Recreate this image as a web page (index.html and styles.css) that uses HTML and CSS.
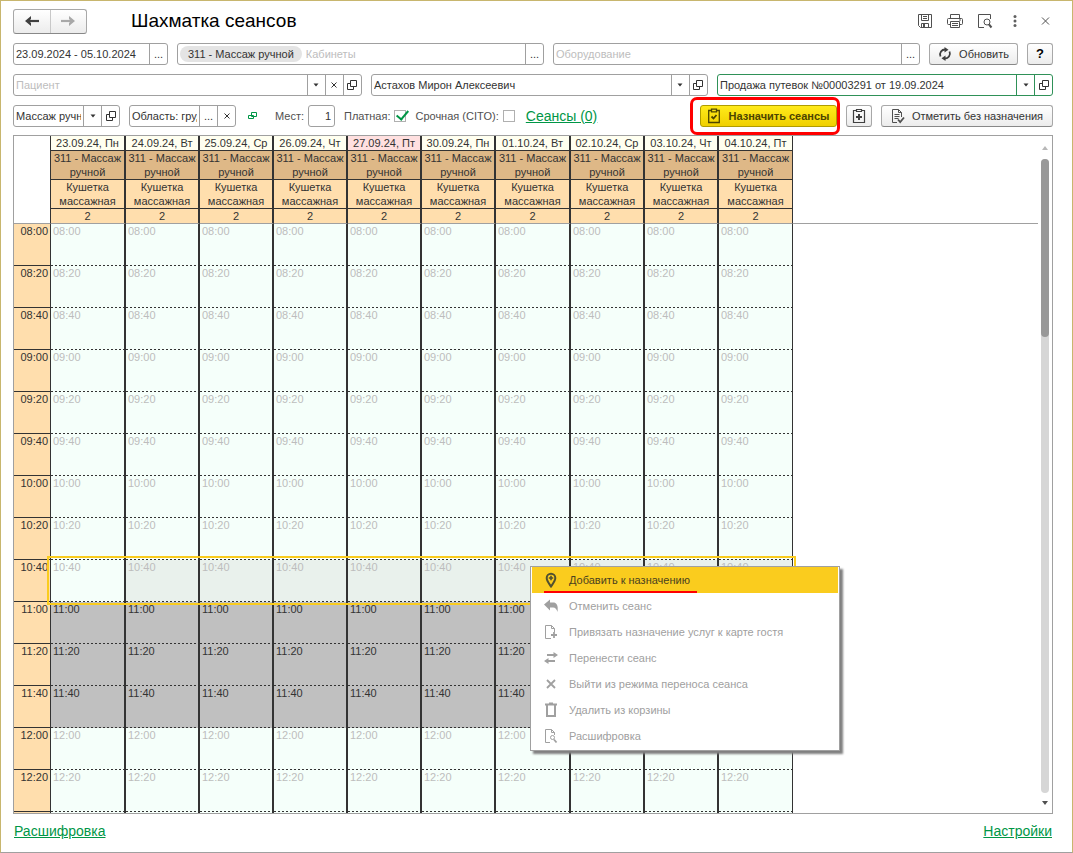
FILE: index.html
```html
<!DOCTYPE html>
<html lang="ru">
<head>
<meta charset="utf-8">
<title>Шахматка сеансов</title>
<link rel="stylesheet" href="styles.css">
</head>
<body>
<svg class="sprite" aria-hidden="true">
  <symbol id="open" viewBox="0 0 12 12"><path d="M4.500 1.500h6v6h-6zM4.500 4.500h-3v6h6v-3" fill="none" stroke="currentColor"/></symbol>
  <symbol id="down" viewBox="0 0 12 12"><path d="M3.500 4.500h5l-2.500 3z" fill="currentColor"/></symbol>
  <symbol id="cross" viewBox="0 0 12 12"><path d="M3.500 3.500l5 5m0-5l-5 5" fill="none" stroke="currentColor"/></symbol>
</svg>
<main class="window">
  <header class="titlebar">
    <div class="nav">
      <button type="button" aria-label="Назад"><svg width="16" height="12" viewBox="0 0 16 12"><path d="M15 6H5" fill="none" stroke="#404040" stroke-width="2.200"/><path d="M1 6l6-5v3L5 6l2 2v3z" fill="#404040"/></svg></button>
      <button type="button" aria-label="Вперед" class="forward"><svg width="16" height="12" viewBox="0 0 16 12"><path d="M1 6h10" fill="none" stroke="#a8a8a8" stroke-width="2.200"/><path d="M15 6L9 1v3l2 2-2 2v3z" fill="#a8a8a8"/></svg></button>
    </div>
    <h1>Шахматка сеансов</h1>
    <div class="tools">
      <button type="button" aria-label="Сохранить"><svg width="16" height="16" viewBox="0 0 16 16" fill="none" stroke="#505050"><path d="M1.500 1.500h13v13h-11l-2-2z"/><path d="M4.500 1.500v6h7v-6M6 3.500h4M6 5.500h4M4.500 14.500v-4h7v4"/><path d="M6 11h2v3H6z" fill="#505050" stroke="none"/></svg></button>
      <button type="button" aria-label="Печать"><svg width="16" height="16" viewBox="0 0 16 16" fill="none" stroke="#505050"><path d="M3.500 5V1.500h9V5M3.500 11.500h-2a1 1 0 0 1-1-1v-4a1 1 0 0 1 1-1h13a1 1 0 0 1 1 1v4a1 1 0 0 1-1 1h-2"/><path d="M3.500 8.500h9v6h-9zM5 10.500h6M5 12.500h6M12 7h2"/></svg></button>
      <button type="button" aria-label="Просмотр"><svg width="16" height="16" viewBox="0 0 16 16" fill="none" stroke="#505050"><path d="M7 14.500H1.500v-13h12V6"/><circle cx="10" cy="9" r="3"/><path d="M12 11.500l2.500 3" stroke-width="2"/></svg></button>
      <button type="button" aria-label="Меню"><svg width="16" height="16" viewBox="0 0 16 16" fill="#606060"><circle cx="8" cy="3.500" r="1.500"/><circle cx="8" cy="8" r="1.500"/><circle cx="8" cy="12.500" r="1.500"/></svg></button>
      <button type="button" aria-label="Закрыть"><svg width="16" height="16" viewBox="0 0 16 16"><path d="M5 4.500l7 7m0-7l-7 7" stroke="#505050" fill="none"/></svg></button>
    </div>
  </header>

  <section class="row">
    <div class="field period"><input aria-label="Период" value="23.09.2024 - 05.10.2024"><button type="button" aria-label="Выбрать период">...</button></div>
    <div class="field rooms"><span class="chip">311 - Массаж ручной</span><input aria-label="Кабинеты" placeholder="Кабинеты"><button type="button" aria-label="Выбрать кабинеты">...</button></div>
    <div class="field equipment"><input aria-label="Оборудование" placeholder="Оборудование"><button type="button" aria-label="Выбрать оборудование">...</button></div>
    <button type="button" class="btn refresh"><svg width="14" height="14" viewBox="0 0 14 14" fill="none" stroke="#404040" stroke-width="1.800"><path d="M2.500 9.500A5 5 0 0 1 7.500 2.500M11.500 4.500A5 5 0 0 1 6.500 11.500"/><path d="M6.500 0l4 2.700-4 2.800zM7.500 8.500l-4 2.800 4 2.700z" fill="#404040" stroke="none"/></svg>Обновить</button>
    <button type="button" class="btn help">?</button>
  </section>

  <section class="row">
    <div class="field patient"><input aria-label="Пациент" placeholder="Пациент"><button type="button" aria-label="Список"><svg><use href="#down"/></svg></button><button type="button" aria-label="Очистить"><svg><use href="#cross"/></svg></button><button type="button" aria-label="Открыть"><svg><use href="#open"/></svg></button></div>
    <div class="field doctor"><input aria-label="Врач" value="Астахов Мирон Алексеевич"><button type="button" aria-label="Список"><svg><use href="#down"/></svg></button><button type="button" aria-label="Открыть"><svg><use href="#open"/></svg></button></div>
    <div class="field order"><input aria-label="Основание" value="Продажа путевок №00003291 от 19.09.2024"><button type="button" aria-label="Список"><svg><use href="#down"/></svg></button><button type="button" aria-label="Открыть"><svg><use href="#open"/></svg></button></div>
  </section>

  <section class="row actions">
    <div class="field service"><input aria-label="Услуга" value="Массаж ручной"><button type="button" aria-label="Список"><svg><use href="#down"/></svg></button><button type="button" aria-label="Открыть"><svg><use href="#open"/></svg></button></div>
    <div class="field area"><input aria-label="Область" value="Область: грудь"><button type="button" aria-label="Выбрать область">...</button><button type="button" aria-label="Очистить"><svg><use href="#cross"/></svg></button></div>
    <button type="button" class="link-icon" aria-label="Связь"><svg width="10" height="8" viewBox="0 0 10 8" fill="none" stroke="#009646"><path d="M3.500.500h5v4h-5z"/><path d="M5.500 3.500h-5v3h5z"/></svg></button>
    <label class="places">Мест: <input class="count" value="1"></label>
    <label class="check paid">Платная: <input type="checkbox" checked></label>
    <label class="check">Срочная (CITO): <input type="checkbox"></label>
    <a class="link sessions" href="#">Сеансы (0)</a>
    <div class="assign-frame"><button type="button" class="btn assign"><svg width="14" height="16" viewBox="0 0 14 16" fill="none" stroke="#4d4500" stroke-width="1.300"><path d="M4 2.500H1.700v12h10.600v-12H10"/><path d="M4.500 1.200h5v2.600h-5z"/><path d="M4.500 8.500l2 2L9.500 7" stroke-width="1.800"/></svg>Назначить сеансы</button></div>
    <button type="button" class="btn add" aria-label="Добавить назначение"><svg width="14" height="16" viewBox="0 0 14 16" fill="none" stroke="#404040" stroke-width="1.200"><path d="M4 2.500H1.500v12h11v-12H10"/><path d="M4.500 1.500h5v2h-5z"/><path d="M7 6v6M4 9h6" stroke-width="2"/></svg></button>
    <button type="button" class="btn mark"><svg width="14" height="16" viewBox="0 0 14 16" fill="none" stroke="#505050"><path d="M6 14.500H1.500v-13h6l3 3V9M7.500 1.500v3h3M3.500 6.500h5M3.500 8.500h5M3.500 10.500h4"/><path d="M7 11.500l2.200 2.500L13 9.500" stroke-width="1.800"/></svg>Отметить без назначения</button>
  </section>

  <section class="sheet">
    <div class="sheet-view">
      <table class="schedule">
        <colgroup id="columns"><col class="time-col"></colgroup>
        <thead id="head"></thead>
        <tbody id="slots"></tbody>
      </table>
      <div class="selection"></div>
    </div>
    <div class="scrollbar" aria-hidden="true"><span class="arrow up"></span><div class="track"><div class="thumb"></div></div><span class="arrow down"></span></div>
    <menu class="context">
      <li><button type="button" class="current"><svg width="16" height="16" viewBox="0 0 16 16" fill="none" stroke="#505030"><path d="M8 14.500C5.500 10.800 3.700 8.700 3.700 6a4.300 4.300 0 0 1 8.600 0C12.300 8.700 10.500 10.800 8 14.500z" stroke-width="2"/><path d="M8 3.800v4.400M5.800 6h4.400" stroke-width="1.600"/></svg><span>Добавить к назначению</span></button></li>
      <li><button type="button" disabled><svg width="16" height="16" viewBox="0 0 16 16" fill="currentColor"><path d="M1 6.500l6-5v3h3c3.500 0 5.500 2.500 4.500 9.500C13.500 11 12.500 9.500 10 9.500H7v3z"/></svg><span>Отменить сеанс</span></button></li>
      <li><button type="button" disabled><svg width="16" height="16" viewBox="0 0 16 16" fill="none" stroke="currentColor"><path d="M8 14.500H2.500v-13h6l3 3V8M8.500 1.500v3h3"/><path d="M11 8v6M8 11h6" stroke-width="1.800"/></svg><span>Привязать назначение услуг к карте гостя</span></button></li>
      <li><button type="button" disabled><svg width="16" height="16" viewBox="0 0 16 16" fill="none" stroke="currentColor" stroke-width="1.800"><path d="M4 5h8M12 11H4"/><path d="M10.500 2l4.500 3-4.500 3zM5.500 8L1 11l4.500 3z" fill="currentColor" stroke="none"/></svg><span>Перенести сеанс</span></button></li>
      <li><button type="button" disabled><svg width="16" height="16" viewBox="0 0 16 16" fill="none" stroke="currentColor" stroke-width="1.800"><path d="M4 4l8 8M12 4l-8 8"/></svg><span>Выйти из режима переноса сеанса</span></button></li>
      <li><button type="button" disabled><svg width="16" height="16" viewBox="0 0 16 16" fill="none" stroke="currentColor" stroke-width="2"><path d="M2 2.500h12M4 3v11h8V3M6 1.500h4"/></svg><span>Удалить из корзины</span></button></li>
      <li><button type="button" disabled><svg width="16" height="16" viewBox="0 0 16 16" fill="none" stroke="currentColor"><path d="M7 14.500H2.500v-13h6l3 3V7M8.500 1.500v3h3"/><circle cx="9.500" cy="9.500" r="2"/><path d="M11 11.500l2.500 3" stroke-width="1.800"/></svg><span>Расшифровка</span></button></li>
    </menu>
  </section>

  <footer class="footer"><a class="link" href="#">Расшифровка</a><a class="link" href="#">Настройки</a></footer>
</main>
<script src="app.js"></script>
</body>
</html>
```
FILE: app.js
```js
const dates = ["23.09.24, Пн", "24.09.24, Вт", "25.09.24, Ср", "26.09.24, Чт", "27.09.24, Пт",
  "30.09.24, Пн", "01.10.24, Вт", "02.10.24, Ср", "03.10.24, Чт", "04.10.24, Пт"];
const times = ["08:00", "08:20", "08:40", "09:00", "09:20", "09:40", "10:00", "10:20", "10:40",
  "11:00", "11:20", "11:40", "12:00", "12:20"];
const busy = ["11:00", "11:20", "11:40"];
const selected = "10:40";
const today = "27.09.24, Пт";

const repeat = (tag, cls, text) => dates.map(() => `<${tag} class="${cls}">${text}</${tag}>`).join("");

document.getElementById("columns").insertAdjacentHTML("beforeend",
  dates.map(() => '<col class="day-col">').join("") + "<col>");

document.getElementById("head").innerHTML =
  '<tr><th rowspan="4" class="corner"></th>' +
  dates.map(d => `<th class="day${d === today ? " today" : ""}">${d}</th>`).join("") +
  '<td rowspan="4" class="rest"></td></tr>' +
  `<tr>${repeat("th", "room", "311 - Массаж ручной")}</tr>` +
  `<tr>${repeat("th", "couch", "Кушетка массажная")}</tr>` +
  `<tr>${repeat("th", "seats", "2")}</tr>`;

// The trailing row without text carries the column rules to the bottom edge.
document.getElementById("slots").innerHTML = times.map(t => {
  const cls = busy.includes(t) ? "busy" : t === selected ? "selected" : "";
  return `<tr class="${cls}"><th>${t}</th>${repeat("td", "slot", t)}</tr>`;
}).join("") + `<tr><th></th>${repeat("td", "slot", "")}</tr>`;
```
FILE: styles.css
```css
* { box-sizing: border-box; }
body {
  margin: 0;
  background: #fff;
  color: #333;
  font: 11px/14px "Liberation Sans", Arial, sans-serif;
}
button, input { font: inherit; color: inherit; }
button { margin: 0; padding: 0; border: 0; background: none; }
.sprite { display: none; }

.window {
  display: flex;
  flex-direction: column;
  height: 100vh;
  padding: 8px 19px 0 12px;
  border: 1px solid #c8b66e;
  border-bottom-color: #a0a0a0;
}

.titlebar { display: flex; align-items: center; height: 24px; margin-bottom: 10px; }
.nav {
  display: flex;
  width: 74px;
  height: 25px;
  border: 1px solid #a8a8a8;
  border-bottom-color: #888;
  border-radius: 3px;
  background: linear-gradient(#fff, #ececec);
}
.nav button { flex: 1; display: flex; align-items: center; justify-content: center; }
.nav .forward { border-left: 1px solid #c8c8c8; }
h1 { margin: 0 0 0 44px; font-size: 19px; line-height: 24px; font-weight: 400; color: #000; }
.tools { display: flex; gap: 14px; margin-left: auto; }
.tools button, .tools svg { display: block; width: 16px; height: 16px; }

.row { display: flex; align-items: center; gap: 9px; height: 22px; margin-bottom: 9px; }
.field {
  display: flex;
  align-items: center;
  height: 22px;
  min-width: 0;
  border: 1px solid #a0a0a0;
  border-radius: 3px;
  background: #fff;
}
.field input {
  flex: 1;
  min-width: 0;
  height: 20px;
  padding: 0 2px;
  border: 0;
  background: none;
  outline: 0;
}
input::placeholder { color: #bdbdbd; opacity: 1; }
.field button {
  display: flex;
  align-items: center;
  justify-content: center;
  flex: none;
  width: 18px;
  height: 20px;
  border-left: 1px solid #a0a0a0;
}
.field button svg { width: 12px; height: 12px; }
.period { flex: 0 0 155px; }
.rooms { flex: 367; }
.equipment { flex: 367; }
.chip { margin-left: 2px; padding: 1px 8px; border-radius: 8px; background: #e4e4e4; white-space: nowrap; }
.rooms input { padding-left: 4px; }
.patient, .doctor, .order { flex: 349; }
.doctor { flex-grow: 337; }
.order { flex-grow: 336; border-color: #2f9158; }
.order button { border-left-color: #2f9158; }
.service { flex: 0 0 107px; }
.area { flex: 0 0 107px; }

.btn {
  display: flex;
  align-items: center;
  justify-content: center;
  flex: none;
  gap: 7px;
  height: 22px;
  border: 1px solid #a8a8a8;
  border-bottom-color: #888;
  border-radius: 3px;
  background: linear-gradient(#fff, #ececec);
  white-space: nowrap;
}
.refresh { width: 89px; }
.help { width: 26px; font-weight: 700; font-size: 13px; color: #000; }

.actions { gap: 0; margin-bottom: 8px; }
.area { margin-left: 9px; }
.link-icon { margin-left: 12px; height: 10px; line-height: 0; }
.places { display: flex; align-items: center; gap: 4px; margin-left: 17px; color: #505050; }
.count {
  width: 27px;
  height: 22px;
  padding: 0 3px;
  border: 1px solid #a0a0a0;
  border-radius: 3px;
  color: #333;
  text-align: right;
}
.check { display: flex; align-items: center; gap: 4px; margin-left: 9px; color: #505050; white-space: nowrap; }
.check input {
  appearance: none;
  width: 12px;
  height: 12px;
  margin: 0;
  border: 1px solid #b0b0b0;
  background: #fff;
}
.check input:checked { position: relative; }
.check input:checked::after {
  content: "";
  position: absolute;
  left: 4px;
  top: -3px;
  width: 5px;
  height: 10px;
  border: solid #009646;
  border-width: 0 2px 2px 0;
  transform: rotate(40deg);
}
.link { color: #009646; font-size: 14px; line-height: 18px; text-decoration: underline; white-space: nowrap; }
.sessions { margin-left: 11px; }
.assign-frame {
  flex: none;
  height: 38px;
  margin-left: auto;
  padding: 5px 0 5px 7px;
  border: 3px solid #f00;
  border-radius: 7px;
}
.assign {
  width: 137px;
  border-color: #b09c00;
  background: linear-gradient(#ffea1a, #f0d000);
  font-weight: 700;
  color: #4d4500;
}
.add { width: 26px; margin-left: 6px; }
.mark { width: 172px; margin-left: 9px; }

.sheet {
  position: relative;
  display: flex;
  flex: 1;
  min-height: 0;
  border: 1px solid #a0a0a0;
}
.sheet-view { position: relative; flex: 1; overflow: hidden; }
.schedule { width: 100%; table-layout: fixed; border-collapse: separate; border-spacing: 0; }
.time-col { width: 37px; }
.day-col { width: 74px; }
.day-col:nth-child(6n + 2) { width: 75px; }
.schedule th, .schedule td { padding: 0; font-weight: 400; vertical-align: top; }
thead th { height: 15px; border-right: 2px solid #333; border-bottom: 1px solid #333; text-align: center; }
thead .corner { border-right-width: 1px; border-bottom-color: #a0a0a0; }
.rest { border-bottom: 1px solid #a0a0a0; }
.day { background: #fffff0; }
.today { background: #ffe0e0; }
thead .room { height: 29px; background: #deb887; }
thead .couch { height: 29px; background: #ffdead; }
.seats { background: #ffdead; }
thead .seats { border-bottom-color: #a0a0a0; }
.day:nth-last-child(2), .room:last-child, .couch:last-child, .seats:last-child, .slot:last-child { border-right-width: 1px !important; }
tbody th {
  height: 42px;
  border-right: 1px solid #333;
  border-bottom: 1px solid #333;
  background: #ffdead;
  text-align: right;
}
.schedule tbody th { padding-right: 2px; }
.schedule .slot {
  padding-left: 2px;
  border-right: 2px solid #333;
  background: repeating-linear-gradient(90deg, #333 0 2px, transparent 2px 4px) bottom / 100% 1px no-repeat #f5fffa;
  color: #bdbdbd;
}
.schedule .busy .slot { background-color: #c0c0c0; color: #333; }
.schedule .selected .slot + .slot { background-color: #e9f1ec; }
.selection { position: absolute; left: 33px; top: 420px; width: 749px; height: 49px; border: 2px solid #facc1e; }

.scrollbar { display: flex; flex-direction: column; align-items: center; width: 14px; padding: 10px 0 8px; }
.track { flex: 1; width: 8px; margin: 9px 0 8px; border-radius: 4px; background: #d6d6d6; }
.thumb { height: 28%; border-radius: 4px; background: #999; }
.arrow { border: 3px solid transparent; }
.arrow.up { border-top: 0; border-bottom: 4px solid #b8b8b8; }
.arrow.down { border-bottom: 0; border-top: 4px solid #505050; }

.context {
  position: absolute;
  left: 516px;
  top: 430px;
  width: 310px;
  margin: 0;
  padding: 0 1px 1px;
  border: 1px solid #a0a0a0;
  background: #fff;
  box-shadow: 3px 3px 2px #808080;
  list-style: none;
}
.context button {
  display: flex;
  align-items: center;
  gap: 10px;
  width: 100%;
  height: 26px;
  padding-left: 11px;
  color: #a0a0a0;
}
.context .current { position: relative; background: #facc1e; color: #4a4220; }
.context .current::after {
  content: "";
  position: absolute;
  left: 12px;
  bottom: 0;
  width: 153px;
  height: 2px;
  background: #f00;
}

.footer { display: flex; justify-content: space-between; height: 38px; padding: 8px 1px 0; }
```
